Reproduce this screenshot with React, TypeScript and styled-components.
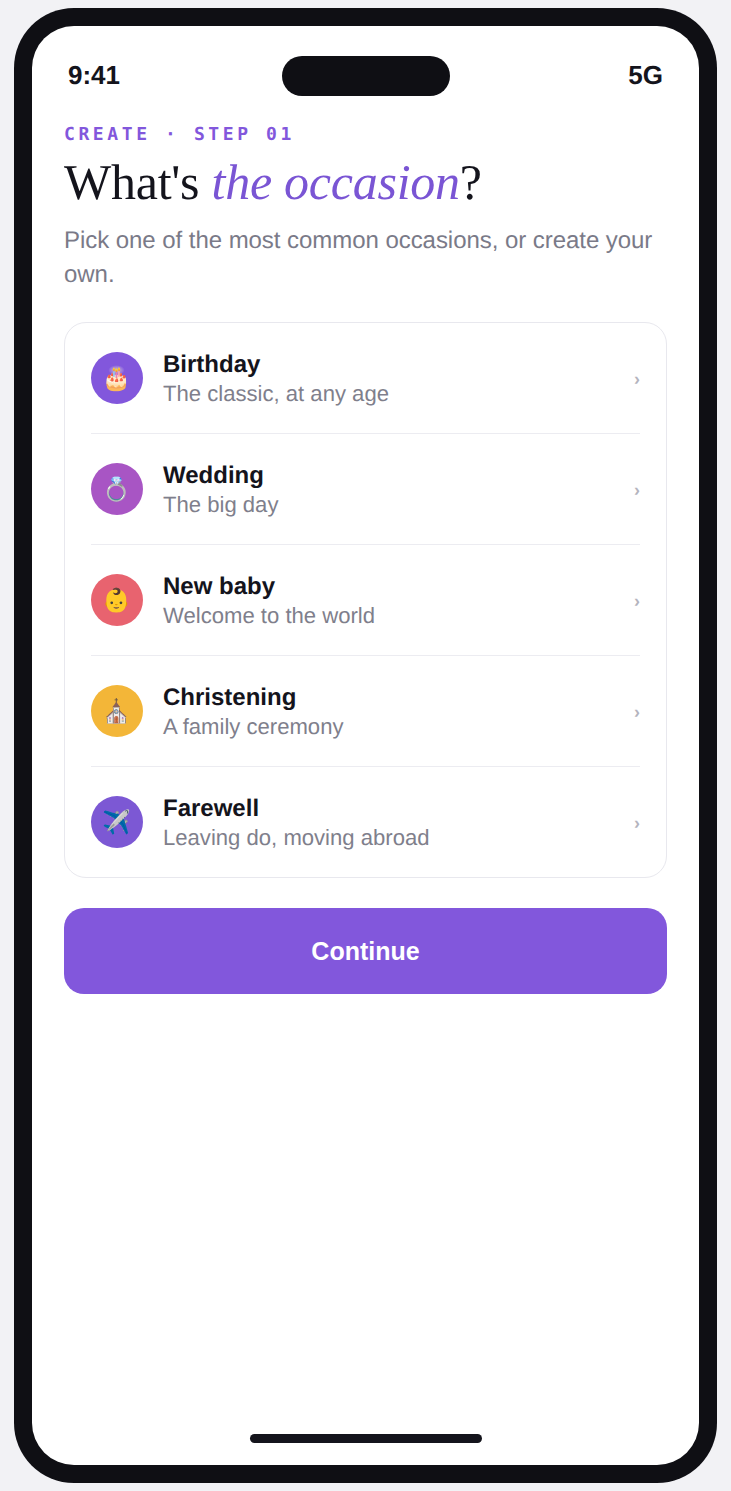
import styled, { createGlobalStyle } from "styled-components";

const GlobalStyle = createGlobalStyle`
  html, body {
    margin: 0;
    padding: 0;
    background: #f2f2f5;
  }
  * {
    box-sizing: border-box;
  }
`;

type Occasion = {
  title: string;
  sub: string;
  emoji: string;
  color: string;
};

const occasions: Occasion[] = [
  { title: "Birthday", sub: "The classic, at any age", emoji: "🎂", color: "#8257dc" },
  { title: "Wedding", sub: "The big day", emoji: "💍", color: "#a855c4" },
  { title: "New baby", sub: "Welcome to the world", emoji: "👶", color: "#e8636f" },
  { title: "Christening", sub: "A family ceremony", emoji: "⛪", color: "#f3b638" },
  { title: "Farewell", sub: "Leaving do, moving abroad", emoji: "✈️", color: "#7c58d4" },
];

export default function App() {
  return (
    <Page>
      <GlobalStyle />
      <Phone>
        <Screen>
          <Island />
          <StatusBar>
            <span>9:41</span>
            <span>5G</span>
          </StatusBar>
          <Content>
            <Eyebrow>CREATE · STEP 01</Eyebrow>
            <Title>
              What's <em>the occasion</em>?
            </Title>
            <Lead>Pick one of the most common occasions, or create your own.</Lead>
            <Card>
              {occasions.map((o) => (
                <Row key={o.title}>
                  <Badge $color={o.color}>{o.emoji}</Badge>
                  <RowText>
                    <RowTitle>{o.title}</RowTitle>
                    <RowSub>{o.sub}</RowSub>
                  </RowText>
                  <Chevron>›</Chevron>
                </Row>
              ))}
            </Card>
            <ContinueButton>Continue</ContinueButton>
          </Content>
          <HomeBar />
        </Screen>
      </Phone>
    </Page>
  );
}

const Page = styled.div`
  width: 731px;
  height: 1491px;
  padding: 8px 14px;
  font-family: "Liberation Sans", Arial, sans-serif;
  text-rendering: geometricPrecision;
`;

const Phone = styled.div`
  width: 703px;
  height: 1475px;
  padding: 18px;
  border-radius: 60px;
  background: #0f0f14;
`;

const Screen = styled.div`
  position: relative;
  height: 100%;
  display: flex;
  flex-direction: column;
  border-radius: 42px;
  background: #fff;
  overflow: hidden;
`;

const Island = styled.div`
  position: absolute;
  top: 30px;
  left: 250px;
  width: 168px;
  height: 40px;
  border-radius: 20px;
  background: #0f0f14;
`;

const StatusBar = styled.div`
  display: flex;
  justify-content: space-between;
  padding: 34px 36px 0;
  font-size: 26px;
  line-height: 30px;
  font-weight: 700;
  color: #14141c;
`;

const Content = styled.div`
  display: flex;
  flex-direction: column;
  padding: 32px 32px 0;
`;

const Eyebrow = styled.div`
  font-family: "DejaVu Sans Mono", monospace;
  font-size: 18px;
  line-height: 26px;
  font-weight: 700;
  letter-spacing: 3.6px;
  color: #8257dc;
`;

const Title = styled.h1`
  margin: 9px 0 0;
  font-family: "Liberation Serif", Georgia, serif;
  font-size: 50px;
  line-height: 50px;
  font-weight: 400;
  letter-spacing: -0.25px;
  color: #14141c;

  em {
    font-style: italic;
    color: #7a55d4;
  }
`;

const Lead = styled.p`
  margin: 17px 0 0;
  font-size: 24px;
  line-height: 34px;
  letter-spacing: -0.05px;
  color: #7a7a88;
`;

const Card = styled.div`
  margin-top: 30px;
  padding: 0 26px;
  border: 1px solid #e8e8ee;
  border-radius: 22px;
  background: #fff;
`;

const Row = styled.div`
  display: flex;
  align-items: center;
  gap: 20px;
  height: 111px;
  border-bottom: 1px solid #ececf1;

  &:last-child {
    height: 110px;
    border-bottom: 0;
  }
`;

const Badge = styled.div<{ $color: string }>`
  flex: none;
  width: 52px;
  height: 52px;
  display: flex;
  align-items: center;
  justify-content: center;
  border-radius: 50%;
  font-size: 23px;
  font-family: "Noto Color Emoji", sans-serif;
  background: ${(p) => p.$color};
`;

const RowText = styled.div`
  flex: 1;
  display: flex;
  flex-direction: column;
  padding-top: 2px;
`;

const RowTitle = styled.div`
  font-size: 24px;
  line-height: 29px;
  font-weight: 700;
  color: #14141c;
`;

const RowSub = styled.div`
  font-size: 22.1px;
  line-height: 29px;
  color: #7f7f8c;
`;

const Chevron = styled.span`
  padding-top: 2px;
  font-size: 18px;
  font-weight: 700;
  color: #b4b4be;
`;

const ContinueButton = styled.button`
  margin-top: 30px;
  height: 86px;
  border: 0;
  border-radius: 20px;
  background: #8257dc;
  color: #fff;
  font-family: inherit;
  font-size: 25px;
  font-weight: 700;
`;

const HomeBar = styled.div`
  width: 232px;
  height: 9px;
  margin: auto auto 22px;
  border-radius: 5px;
  background: #14141c;
`;
